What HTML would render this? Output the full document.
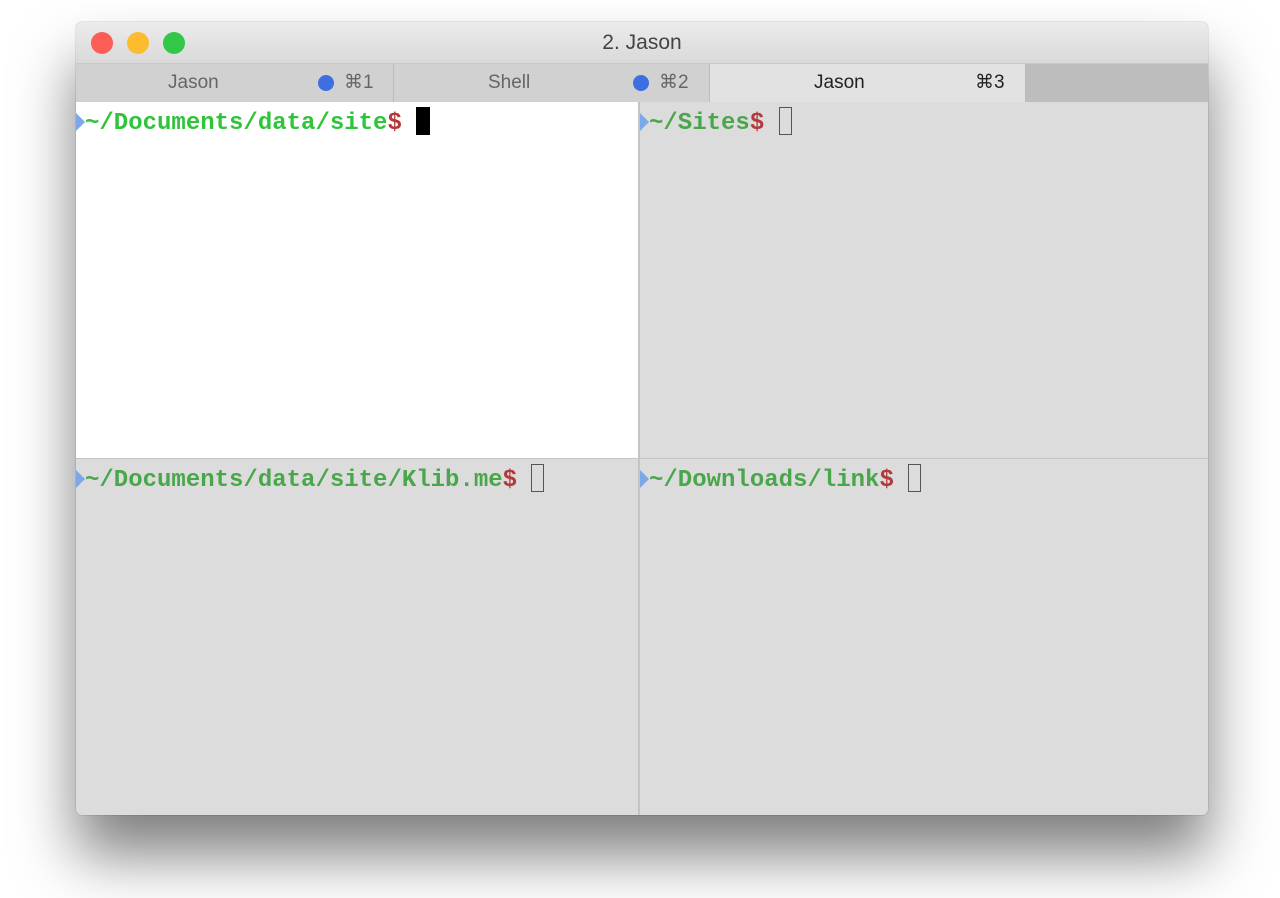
<!DOCTYPE html>
<html><head><style>
body{margin:0;width:1280px;height:898px;background:#fff;position:relative;overflow:hidden;font-family:"Liberation Sans",sans-serif}
.win{position:absolute;left:76px;top:22px;width:1132px;height:793px;border-radius:6px;background:#dddcdd;box-shadow:0 40px 60px rgba(0,0,0,0.5),0 0 1px rgba(0,0,0,0.5);overflow:hidden}
.title{position:absolute;left:0;top:0;width:100%;height:41px;background:linear-gradient(#ececec,#d9d9d9);text-align:center;line-height:42px;font-size:21px;color:#444}
.dot{position:absolute;top:10px;width:22px;height:22px;border-radius:50%}
.tabs{position:absolute;left:0;top:41px;width:100%;height:38px;background:#bdbdbd;border-top:1px solid #c8c8c8;border-bottom:1px solid #bbb}
.tab{position:absolute;top:0;height:38px;background:#d1d1d1;border-right:1px solid #bbb;font-size:19px;color:#666;line-height:38px}
.tab span{position:absolute}
.bd{display:inline-block;width:16px;height:16px;border-radius:50%;background:#3d6fe0;position:absolute;top:11px}
.pane{position:absolute;background:#dddcdd}
.p{position:absolute;left:9px;top:5px;font-family:"Liberation Mono",monospace;font-weight:bold;font-size:24px;color:#4aa64a;white-space:pre;line-height:30px}
.p b{color:#b23a3a}
.cur{display:inline-block;width:13px;height:28px;border:1.5px solid #555;box-sizing:border-box;vertical-align:-6px}
.arr{position:absolute;left:0;top:11px;width:0;height:0;border-left:9px solid #7aa8e8;border-top:9px solid transparent;border-bottom:9px solid transparent}
</style></head><body>
<div class="win">
<div class="title">2. Jason
<div class="dot" style="left:15px;background:#fc5d57"></div>
<div class="dot" style="left:51px;background:#fdbc2e"></div>
<div class="dot" style="left:87px;background:#33c748"></div>
</div>
<div class="tabs">
<div class="tab" style="left:0;width:317px"><span style="left:92px">Jason</span><i class="bd" style="left:242px"></i><span style="left:268px">⌘1</span></div>
<div class="tab" style="left:318px;width:315px"><span style="left:94px">Shell</span><i class="bd" style="left:239px"></i><span style="left:265px">⌘2</span></div>
<div class="tab" style="left:634px;width:315px;background:#e2e2e2;color:#222"><span style="left:104px">Jason</span><span style="left:265px">⌘3</span></div>
</div>
<div class="pane" style="left:0;top:80px;width:562px;height:356px;background:#fff"><div class="arr"></div><div class="p" style="color:#2fc43a">~/Documents/data/site<b>$</b> <span class="cur" style="background:#000;border-color:#000;width:14px"></span></div></div>
<div class="pane" style="left:564px;top:80px;width:568px;height:356px"><div class="arr"></div><div class="p">~/Sites<b>$</b> <span class="cur"></span></div></div>
<div class="pane" style="left:0;top:437px;width:562px;height:356px"><div class="arr"></div><div class="p">~/Documents/data/site/Klib.me<b>$</b> <span class="cur"></span></div></div>
<div class="pane" style="left:564px;top:437px;width:568px;height:356px"><div class="arr"></div><div class="p">~/Downloads/link<b>$</b> <span class="cur"></span></div></div>
<div style="position:absolute;left:562px;top:80px;width:2px;height:713px;background:#c4c4c4"></div>
<div style="position:absolute;left:0;top:436px;width:100%;height:1px;background:#c4c4c4"></div>
</div>
</body></html>
